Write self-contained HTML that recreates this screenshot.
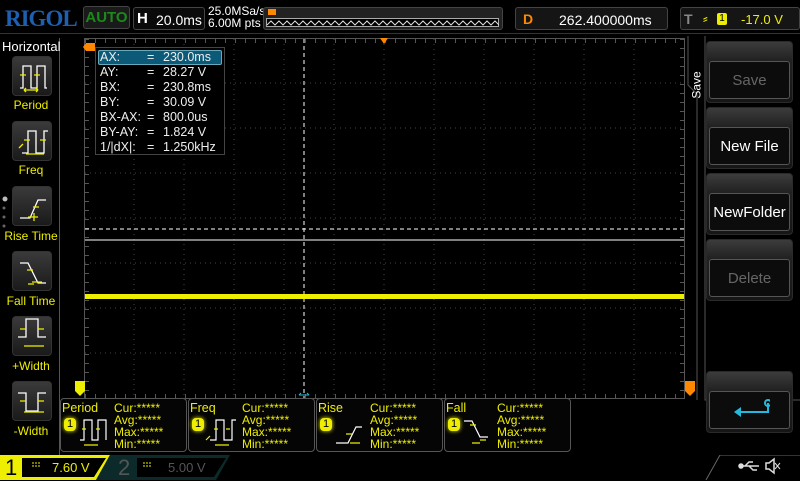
<!DOCTYPE html>
<html><head><meta charset="utf-8"><style>
*{margin:0;padding:0;box-sizing:border-box}
body{width:800px;height:480px;background:#000;position:relative;overflow:hidden;font-family:"Liberation Sans",sans-serif;color:#fff}
.a{position:absolute}
.box{position:absolute;border:1px solid #444;border-radius:3px;background:#111}
.lbtn{position:absolute;left:12px;width:40px;height:40px;border-radius:4px;background:linear-gradient(#3a3a3a,#1a1a1a);border:1px solid #333}
.llab{position:absolute;left:0;width:62px;text-align:center;color:#ee0;font-size:12px}
.rb{position:absolute;left:706px;width:87px;height:62px;border-radius:4px;background:linear-gradient(#3c3c3c,#222 18px,#161616);border:1px solid #2a2a2a}
.rb .in{position:absolute;left:2px;right:2px;top:19px;bottom:3px;border:1px solid #555;border-radius:3px;background:#0c0c0c;font-size:15px;display:flex;align-items:center;justify-content:center}
.meas{position:absolute;top:398px;height:54px;border:1px solid #555;border-radius:4px;background:#050505;font-size:11px;color:#ee0}
.one{position:absolute;background:#ee0;color:#000;border-radius:4px;width:12px;height:13px;font-size:11px;text-align:center;line-height:13px;box-shadow:0 0 4px #ee0}
.cur td{padding:0;height:15px;line-height:15px}
.mt{position:absolute;top:402px;font-size:12px;line-height:12px;color:#ee0}
</style></head><body>
<div class="a" style="left:5px;top:6px;font-family:'Liberation Serif',serif;font-weight:bold;font-size:23px;color:#1e5fb0;letter-spacing:-1px">RIGOL</div>
<div class="box" style="left:83px;top:6px;width:47px;height:23px;background:#1a1a1a;color:#1a8a1a;font-size:15px;font-weight:bold;text-align:center;line-height:22px">AUTO</div>
<div class="box" style="left:133px;top:7px;width:72px;height:23px;background:#0a0a0a"><span class="a" style="left:3px;top:2px;font-weight:bold;font-size:15px">H</span><span class="a" style="left:22px;top:4px;font-size:14px">20.0ms</span></div>
<div class="a" style="left:208px;top:5px;font-size:12px;line-height:12px">25.0MSa/s<br>6.00M pts</div>
<div class="box" style="left:263px;top:7px;width:240px;height:23px;background:#222"></div>
<div class="a" style="left:266px;top:18px;width:233px;height:9px;border:1px solid #aaa;background:#000"></div>
<svg class="a" style="left:267px;top:19px" width="232" height="8"><polyline fill="none" stroke="#ddd" stroke-width="1" points="0,6 4,2 8,6 12,2 16,6 20,2 24,6 28,2 32,6 36,2 40,6 44,2 48,6 52,2 56,6 60,2 64,6 68,2 72,6 76,2 80,6 84,2 88,6 92,2 96,6 100,2 104,6 108,2 112,6 116,2 120,6 124,2 128,6 132,2 136,6 140,2 144,6 148,2 152,6 156,2 160,6 164,2 168,6 172,2 176,6 180,2 184,6 188,2 192,6 196,2 200,6 204,2 208,6 212,2 216,6 220,2 224,6 228,2 232,6"/></svg>
<div class="a" style="left:268px;top:9px;width:8px;height:6px;background:#f80"></div>
<div class="box" style="left:515px;top:7px;width:153px;height:23px;background:#151515"><span class="a" style="left:7px;top:3px;color:#f80;font-weight:bold;font-size:14px">D</span><span class="a" style="left:43px;top:4px;font-size:14px">262.400000ms</span></div>
<div class="box" style="left:680px;top:7px;width:120px;height:23px;background:#151515"><span class="a" style="left:3px;top:3px;color:#888;font-weight:bold;font-size:14px">T</span><span class="a" style="left:22px;top:2px;color:#ee0;font-size:14px">⸗</span><span class="a" style="left:36px;top:5px;width:10px;height:12px;background:#ee0;color:#000;font-size:10px;text-align:center;border-radius:2px">1</span><span class="a" style="left:60px;top:4px;color:#ee0;font-size:13px">-17.0 V</span></div>
<div class="a" style="left:0;top:33px;width:800px;height:1px;background:#333"></div>
<div class="a" style="left:59px;top:38px;width:1px;height:420px;background:#555"></div>
<div class="a" style="left:2px;top:39px;font-size:13px">Horizontal</div>
<div class="lbtn" style="top:56px"></div><div class="llab" style="top:98px">Period</div>
<div class="lbtn" style="top:121px"></div><div class="llab" style="top:163px">Freq</div>
<div class="lbtn" style="top:186px"></div><div class="llab" style="top:229px">Rise Time</div>
<div class="lbtn" style="top:251px"></div><div class="llab" style="top:294px">Fall Time</div>
<div class="lbtn" style="top:316px"></div><div class="llab" style="top:359px">+Width</div>
<div class="lbtn" style="top:381px"></div><div class="llab" style="top:424px">-Width</div>
<svg class="a" style="left:0;top:0" width="60" height="440" fill="none" stroke-width="1.3">
<g stroke="#fff"><path d="M20 88h3V66h8v22h6V66h8v22h2"/><path d="M22 153h6v-22h8v22h8v-22h4"/><path d="M20 218h10l8-18h8"/><path d="M20 263h8l10 20h8"/><path d="M18 337h8v-18h12v18h8"/><path d="M18 393h8v18h12v-18h8"/></g>
<g stroke="#ee0"><path d="M20 75h6M34 75h6M24 90h14M24 90l2-2M24 90l2 2M38 90l-2-2M38 90l-2 2"/><path d="M24 140h6M40 140h6M26 154h18M19 148l4-4"/><path d="M33 207h6M28 217h10M34 213v8"/><path d="M27 270h6M32 282h10M28 284h6"/><path d="M20 329h6M38 329h6M24 346h20"/><path d="M20 401h6M38 401h6M24 412h20"/></g>
<circle cx="5" cy="199" r="2.5" fill="#bbb" stroke="none"/><circle cx="4" cy="208" r="1.5" fill="#666" stroke="none"/><circle cx="4" cy="217" r="1.5" fill="#666" stroke="none"/><circle cx="4" cy="226" r="1.5" fill="#666" stroke="none"/>
</svg>
<svg class="a" style="left:0;top:0" width="800" height="480">
<rect x="84.5" y="38.5" width="600" height="360" fill="none" stroke="#555"/>
<g stroke="#444" stroke-dasharray="1,4">
<path d="M134 39V398M184 39V398M234 39V398M284 39V398M334 39V398M384 39V398M434 39V398M484 39V398M534 39V398M584 39V398M634 39V398"/>
<path d="M85 83H684M85 128H684M85 173H684M85 218H684M85 263H684M85 308H684M85 353H684"/>
</g>
<g stroke="#555" stroke-dasharray="1,9"><path d="M85 41H684M85 396H684" stroke-width="4"/><path d="M87 39V398M682 39V398" stroke-width="4" stroke-dasharray="1,8"/></g>
<path d="M85 229H684" stroke="#fff" stroke-dasharray="4,3"/>
<path d="M85 240H684" stroke="#fff"/>
<path d="M304 39V398" stroke="#fff" stroke-dasharray="4,3"/>
<rect x="85" y="294" width="599" height="5" fill="#ee0"/>
<path d="M380 38h8l-4 6z" fill="#f80"/>
<path d="M86 43h9v8h-9l-3-4z" fill="#f80"/>
<path d="M75 381h10v10l-5 5l-5-5z" fill="#ee0"/>
<path d="M685 381h10v10l-5 5l-5-5z" fill="#f80"/>
<path d="M299 395h10M299 395l2-2M309 395l-2-2" stroke="#2bd" />
<path d="M705 36V400H800M688 36V85L697 94V400" stroke="#555" fill="none"/>
</svg>
<div class="a" style="left:95px;top:47px;width:130px;height:108px;background:#000;border:1px solid #444"></div>
<div class="a" style="left:98px;top:50px;width:124px;height:15px;background:#0d5a78;border:1px solid #6ab;border-radius:2px"></div>
<table class="a cur" style="left:100px;top:50px;font-size:12.5px;border-collapse:collapse;color:#eee">
<tr><td style="width:47px">AX:</td><td style="width:16px">=</td><td>230.0ms</td></tr>
<tr><td>AY:</td><td>=</td><td>28.27 V</td></tr>
<tr><td>BX:</td><td>=</td><td>230.8ms</td></tr>
<tr><td>BY:</td><td>=</td><td>30.09 V</td></tr>
<tr><td>BX-AX:</td><td>=</td><td>800.0us</td></tr>
<tr><td>BY-AY:</td><td>=</td><td>1.824 V</td></tr>
<tr><td>1/|dX|:</td><td>=</td><td>1.250kHz</td></tr>
</table>
<div class="a" style="left:683px;top:78px;transform:rotate(-90deg);font-size:12px">Save</div>
<div class="rb" style="top:41px"><div class="in" style="color:#666">Save</div></div>
<div class="rb" style="top:107px"><div class="in">New File</div></div>
<div class="rb" style="top:173px"><div class="in">NewFolder</div></div>
<div class="rb" style="top:239px"><div class="in" style="color:#666">Delete</div></div>
<div class="rb" style="top:371px"><div class="in"><svg width="40" height="22"><path d="M38 4v9H8" stroke="#2bd" stroke-width="2" fill="none"/><path d="M4 13l7-5v10z" fill="#2bd"/><circle cx="38" cy="4" r="3" fill="none" stroke="#2bd" stroke-width="2"/></svg></div></div>
<div class="meas" style="left:60px;width:127px"><span class="a" style="left:1px;top:2px;font-size:12.5px">Period</span><div class="one" style="left:3px;top:19px">1</div></div>
<div class="meas" style="left:188px;width:127px"><span class="a" style="left:1px;top:2px;font-size:12.5px">Freq</span><div class="one" style="left:3px;top:19px">1</div></div>
<div class="meas" style="left:316px;width:127px"><span class="a" style="left:1px;top:2px;font-size:12.5px">Rise</span><div class="one" style="left:3px;top:19px">1</div></div>
<div class="meas" style="left:444px;width:127px"><span class="a" style="left:1px;top:2px;font-size:12.5px">Fall</span><div class="one" style="left:3px;top:19px">1</div></div>
<div class="mt" style="left:114px">Cur:*****<br>Avg:*****<br>Max:*****<br>Min:*****</div>
<div class="mt" style="left:242px">Cur:*****<br>Avg:*****<br>Max:*****<br>Min:*****</div>
<div class="mt" style="left:370px">Cur:*****<br>Avg:*****<br>Max:*****<br>Min:*****</div>
<div class="mt" style="left:497px">Cur:*****<br>Avg:*****<br>Max:*****<br>Min:*****</div>
<svg class="a" style="left:0;top:390px" width="600" height="60" fill="none" stroke-width="1.2">
<g stroke="#fff"><path d="M80 50h4V30h8v20h6V30h8v20"/><path d="M210 50h6V30h8v20h8V30h4"/><path d="M336 53h12l8-16h6"/><path d="M464 31h8l8 16h8"/></g>
<g stroke="#ee0"><path d="M82 39h4M96 39h4M84 55h14"/><path d="M214 39h4M226 39h4M215 55h14M206 50l4-4"/><path d="M346 44h6M350 53h10"/><path d="M470 35h6M480 50h6M472 53h8"/></g>
</svg>
<svg class="a" style="left:0;top:455px" width="800" height="25">
<path d="M0 0H110L96 25H0z" fill="#ee0"/>
<path d="M22 3H106L94 22H22z" fill="#000"/>
<path d="M110 0H230L216 25H96z" fill="#0c2a2a"/>
<path d="M137 3H226L214 22H137z" fill="#000"/>
<path d="M800 0H720L706 25" stroke="#666" fill="none"/>
<path d="M32 8h8M32 11h8M143 8h8M143 11h8" stroke-width="1" stroke="#ee0" stroke-dasharray="2,1"/>
<g stroke="#ddd" fill="none" stroke-width="1.5"><path d="M741 11h18M745 11l4-4h4M749 11l4 4h4"/><circle cx="741" cy="11" r="2" fill="#ddd"/><path d="M766 8h3l5-4v14l-5-4h-3z"/><path d="M775 8l5 6M780 8l-5 6" stroke-width="1"/></g>
</svg>
<div class="a" style="left:5px;top:455px;font-size:22px;color:#000">1</div>
<div class="a" style="left:52px;top:460px;font-size:13px;color:#ee0">7.60 V</div>
<div class="a" style="left:118px;top:455px;font-size:22px;color:#555">2</div>
<div class="a" style="left:168px;top:460px;font-size:13px;color:#555">5.00 V</div>
</body></html>
